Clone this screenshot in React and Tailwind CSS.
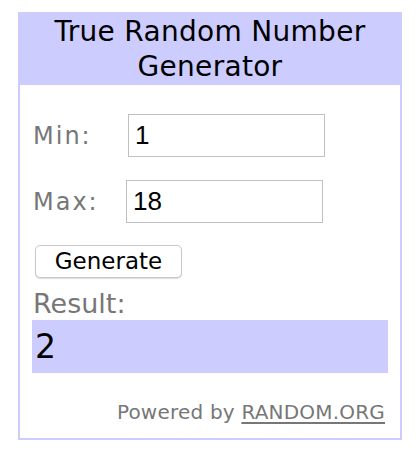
export default function App() {
  return (
    <div className="w-[418px] h-[452px] bg-white pt-[12px] pl-[18px]">
      <div className="w-[384px] h-[428px] border-2 border-[#ccccff] flex flex-col">
        <div className="bg-[#ccccff] -mx-[2px] -mt-[2px] h-[73px] flex items-center justify-center text-center font-['DejaVu_Sans',Verdana,sans-serif] text-[28px] leading-[35px] tracking-[0.3px] text-black">
          True Random Number
          <br />
          Generator
        </div>
        <div className="flex flex-col px-[12px]">
          <div className="flex items-center mt-[29px] h-[43px]">
            <span className="w-[96px] pl-[1px] font-['DejaVu_Sans',Verdana,sans-serif] text-[24px] tracking-[2px] text-[#777]">Min:</span>
            <div className="w-[197px] h-[43px] border border-[#c0c0c0] flex items-center pl-[6px] font-['Liberation_Sans',Arial,sans-serif] text-[26px] text-black">
              1
            </div>
          </div>
          <div className="flex items-center mt-[23px] h-[43px]">
            <span className="w-[94px] pl-[1px] font-['DejaVu_Sans',Verdana,sans-serif] text-[24px] tracking-[2px] text-[#777]">Max:</span>
            <div className="w-[197px] h-[43px] border border-[#c0c0c0] flex items-center pl-[6px] font-['Liberation_Sans',Arial,sans-serif] text-[26px] text-black">
              18
            </div>
          </div>
          <button className="mt-[22px] ml-[3px] w-[147px] h-[33px] rounded-[5px] border border-[#c8c8c8] bg-white shadow-[0_1px_1px_rgba(0,0,0,0.15)] font-['DejaVu_Sans',Verdana,sans-serif] text-[23px] leading-none text-black">
            Generate
          </button>
          <div className="mt-[9px] h-[33px] leading-[33px] pl-[1px] font-['DejaVu_Sans',Verdana,sans-serif] text-[27px] text-[#777]">
            Result:
          </div>
          <div className="h-[53px] bg-[#ccccff] flex items-center pl-[3px] font-['DejaVu_Sans',Verdana,sans-serif] text-[33px] text-black">
            2
          </div>
          <div className="mt-[24px] text-right pr-[3px] font-['DejaVu_Sans',Verdana,sans-serif] text-[20px] tracking-[0.2px] text-[#777]">
            Powered by <span className="underline underline-offset-[3px]">RANDOM.ORG</span>
          </div>
        </div>
      </div>
    </div>
  );
}
